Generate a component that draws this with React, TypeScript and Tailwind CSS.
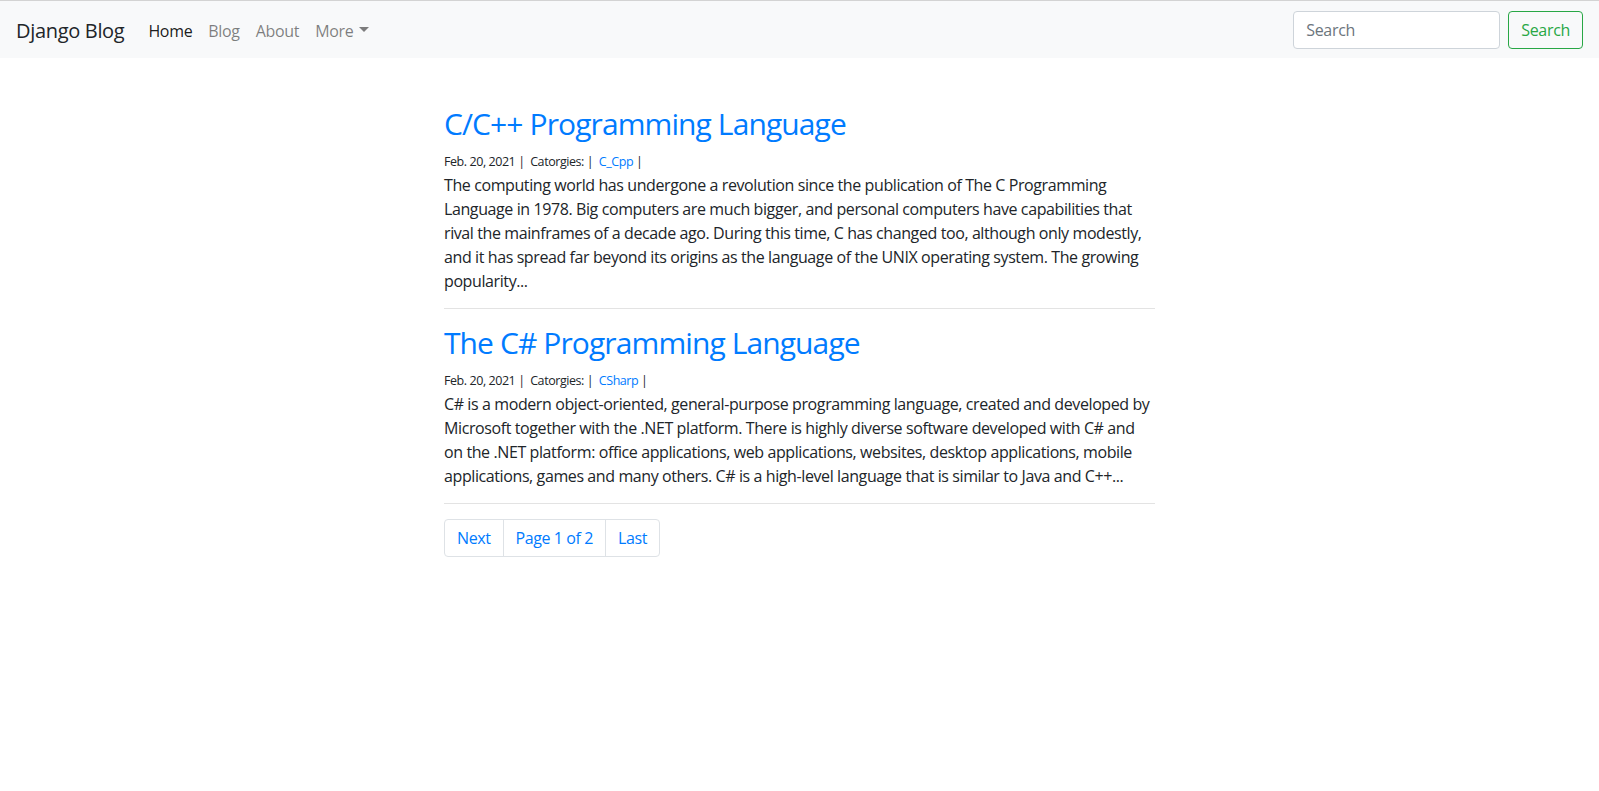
const posts = [
  {
    title: "C/C++ Programming Language",
    date: "Feb. 20, 2021",
    category: "C_Cpp",
    body: "The computing world has undergone a revolution since the publication of The C Programming Language in 1978. Big computers are much bigger, and personal computers have capabilities that rival the mainframes of a decade ago. During this time, C has changed too, although only modestly, and it has spread far beyond its origins as the language of the UNIX operating system. The growing popularity..."
  },
  {
    title: "The C# Programming Language",
    date: "Feb. 20, 2021",
    category: "CSharp",
    body: "C# is a modern object-oriented, general-purpose programming language, created and developed by Microsoft together with the .NET platform. There is highly diverse software developed with C# and on the .NET platform: office applications, web applications, websites, desktop applications, mobile applications, games and many others. C# is a high-level language that is similar to Java and C++..."
  }
];

const Navbar = () => {
  return (
    <nav className="flex items-center justify-between h-[58px] border-t border-[#d3d3d3] bg-[#f8f9fa] px-4">
      <div className="flex items-center mt-[2px]">
        <a href="#" className="text-[20px] text-[#212529] mr-4 leading-[30px] tracking-[-0.016em]">
          Django Blog
        </a>
        <ul className="flex items-center text-[16px] leading-6 tracking-[-0.02em]">
          <li>
            <a href="#" className="px-2 text-[rgba(0,0,0,0.9)]">Home</a>
          </li>
          <li>
            <a href="#" className="px-2 text-[rgba(0,0,0,0.5)]">Blog</a>
          </li>
          <li>
            <a href="#" className="px-2 text-[rgba(0,0,0,0.5)]">About</a>
          </li>
          <li>
            <a href="#" className="flex items-center px-2 text-[rgba(0,0,0,0.5)]">
              More
              <span className="ml-[6px] mb-[2px] border-t-[5px] border-x-[5px] border-t-[rgba(0,0,0,0.5)] border-x-transparent" />
            </a>
          </li>
        </ul>
      </div>
      <form className="flex items-center">
        <input
          type="search"
          placeholder="Search"
          className="w-[207px] h-[38px] px-3 mr-2 text-[16px] tracking-[-0.02em] bg-white border border-[#ced4da] rounded placeholder:text-[#6c757d] outline-none"
        />
        <button
          type="button"
          className="h-[38px] px-3 text-[16px] tracking-[-0.02em] text-[#28a745] border border-[#28a745] rounded"
        >
          Search
        </button>
      </form>
    </nav>
  );
};

const PostItem = ({ title, date, category, body }: (typeof posts)[number]) => (
  <div>
    <h2 className="text-[30px] leading-[38px] font-normal tracking-[-0.03em] text-[#007bff] mb-2">
      <a href="#">{title}</a>
    </h2>
    <div className="text-[12.5px] leading-[22px] text-[#212529] tracking-[-0.035em]">
      {date} |&nbsp; Catorgies: |&nbsp;{" "}
      <a href="#" className="text-[#007bff]">{category}</a> |
    </div>
    <p className="text-[16px] leading-6 text-[#212529] tracking-[-0.025em] mb-[15px]">{body}</p>
  </div>
);

export default function App() {
  return (
    <div className="min-h-screen bg-white font-['Open_Sans',sans-serif] text-[#212529]">
      <Navbar />
      <main className="w-[711px] mx-auto pt-[47px]">
        {posts.map((post) => (
          <div key={post.title}>
            <PostItem {...post} />
            <hr className="border-t border-[#e3e3e3] mb-[15px]" />
          </div>
        ))}
        <ul className="inline-flex text-[16px] leading-5 tracking-[-0.025em] text-[#007bff] border border-[#dee2e6] rounded">
          <li className="px-3 py-2">
            <a href="#">Next</a>
          </li>
          <li className="px-3 py-2 border-l border-[#dee2e6]">
            <a href="#">Page 1 of 2</a>
          </li>
          <li className="px-3 py-2 border-l border-[#dee2e6]">
            <a href="#">Last</a>
          </li>
        </ul>
      </main>
    </div>
  );
}
